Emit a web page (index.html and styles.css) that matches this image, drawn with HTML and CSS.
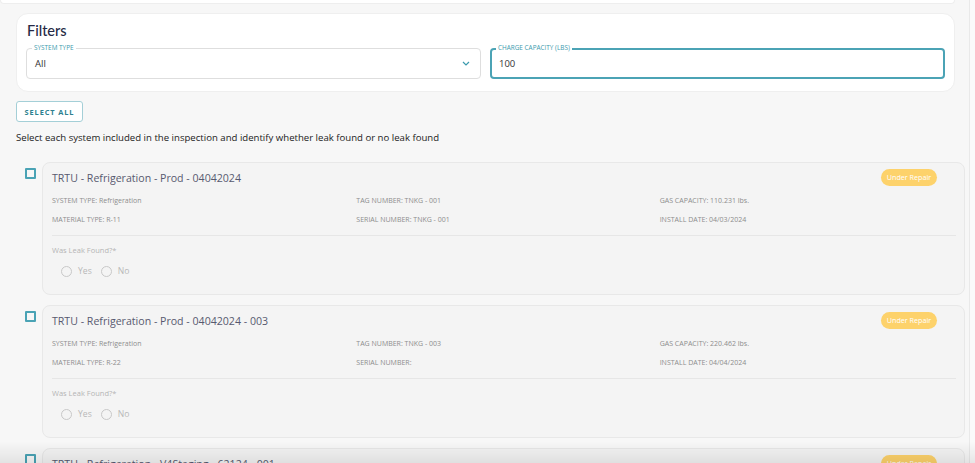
FILE: index.html
```html
<!DOCTYPE html>
<html>
<head>
  <link rel="stylesheet" href="styles.css">
</head>
<body>
  <div class="page">
    <div class="main">
      <div class="top-card"></div>

      <div class="filters">
        <h2 class="filters-title">Filters</h2>
        <div class="filter-row">
          <div class="field">
            <span class="field-label">SYSTEM TYPE</span>
            <span class="field-value">All</span>
            <svg class="chevron" width="8" height="5" viewBox="0 0 8 5"><path d="M1 1l3 3 3-3" fill="none" stroke="#3a9aad" stroke-width="1.2"/></svg>
          </div>
          <div class="field field-active">
            <span class="field-label">CHARGE CAPACITY <span class="label-tail">(LBS)</span></span>
            <span class="field-value">100</span>
          </div>
        </div>
      </div>

      <button class="select-all">SELECT ALL</button>
      <p class="hint">Select each system included in the inspection and identify whether leak found or no leak found</p>

      <div class="system-list">
        <div class="system-row">
          <span class="checkbox"></span>
          <div class="system-card">
            <div class="card-head">
              <h3 class="system-name">TRTU - Refrigeration - Prod - 04042024</h3>
              <span class="status-badge">Under Repair</span>
            </div>
            <div class="info-grid">
              <span>SYSTEM TYPE: Refrigeration</span>
              <span>TAG NUMBER: TNKG - 001</span>
              <span>GAS CAPACITY: 110.231 lbs.</span>
              <span>MATERIAL TYPE: R-11</span>
              <span>SERIAL NUMBER: TNKG - 001</span>
              <span>INSTALL DATE: 04/03/2024</span>
            </div>
            <div class="leak-section">
              <div class="leak-label">Was Leak Found?*</div>
              <div class="radio-row">
                <label class="radio"><span class="radio-dot"></span>Yes</label>
                <label class="radio"><span class="radio-dot"></span>No</label>
              </div>
            </div>
          </div>
        </div>

        <div class="system-row">
          <span class="checkbox"></span>
          <div class="system-card">
            <div class="card-head">
              <h3 class="system-name">TRTU - Refrigeration - Prod - 04042024 - 003</h3>
              <span class="status-badge">Under Repair</span>
            </div>
            <div class="info-grid">
              <span>SYSTEM TYPE: Refrigeration</span>
              <span>TAG NUMBER: TNKG - 003</span>
              <span>GAS CAPACITY: 220.462 lbs.</span>
              <span>MATERIAL TYPE: R-22</span>
              <span>SERIAL NUMBER:</span>
              <span>INSTALL DATE: 04/04/2024</span>
            </div>
            <div class="leak-section">
              <div class="leak-label">Was Leak Found?*</div>
              <div class="radio-row">
                <label class="radio"><span class="radio-dot"></span>Yes</label>
                <label class="radio"><span class="radio-dot"></span>No</label>
              </div>
            </div>
          </div>
        </div>

        <div class="system-row">
          <span class="checkbox"></span>
          <div class="system-card">
            <div class="card-head">
              <h3 class="system-name">TRTU - Refrigeration - V4Staging - 62124 - 001</h3>
              <span class="status-badge">Under Repair</span>
            </div>
          </div>
        </div>
      </div>
    </div>
    <div class="scroll-track"></div>
  </div>
  <div class="bottom-shade"></div>
</body>
</html>
```

FILE: styles.css
```css
body {
  margin: 0;
  height: 463px;
  overflow: hidden;
  background: #f7f7f7;
  font-family: "Open Sans", Arial, sans-serif;
}
.page {
  display: flex;
  height: 100%;
}
.main {
  flex: 1;
  padding: 0 4px 0 16px;
}
.scroll-track {
  width: 5px;
  background: #fafafa;
  border-left: 1px solid #e9e9e9;
}
.top-card {
  height: 3px;
  margin: 0 10px 0 -16px;
  background: #fff;
  border: 1px solid #eeeeee;
  border-top: none;
  border-radius: 0 0 10px 10px;
}
.filters {
  margin: 9px 10px 0 0;
  padding: 8px 9px 12px;
  background: #fff;
  border: 1px solid #efefef;
  border-radius: 12px;
}
.filters-title {
  margin: 0 0 8px 1px;
  font-family: Lato, "Open Sans", sans-serif;
  font-size: 14.5px;
  font-weight: 500;
  color: #262a45;
  line-height: 18px;
}
.filter-row {
  display: flex;
  gap: 9px;
}
.field {
  flex: 1;
  position: relative;
  height: 31px;
  box-sizing: border-box;
  display: flex;
  align-items: center;
  padding: 0 8px;
  border: 1px solid #dedede;
  border-radius: 4px;
}
.field-active {
  border: 2px solid #4ba3b5;
  padding: 0 7px;
}
.field-label {
  position: absolute;
  top: -5px;
  left: 5px;
  padding: 0 2px;
  background: #fff;
  font-size: 6.4px;
  line-height: 8px;
  color: #3a9aad;
}
.field-active .field-label {
  top: -6px;
  left: 4px;
}
.label-tail {
  background: transparent;
}
.field-value {
  flex: 1;
  font-size: 9.5px;
  color: #333;
}
.chevron {
  margin-right: 2px;
}
.select-all {
  display: block;
  margin-top: 9px;
  height: 21px;
  width: 67px;
  padding: 0;
  background: #fff;
  border: 1px solid #a4cfd7;
  border-radius: 3px;
  font-family: "Open Sans", Arial, sans-serif;
  font-size: 7.4px;
  font-weight: 700;
  letter-spacing: 0.9px;
  color: #2d7f8f;
}
.hint {
  margin: 9px 0 0;
  font-size: 9.6px;
  line-height: 13px;
  color: #222;
}
.system-list {
  margin-top: 18px;
  display: flex;
  flex-direction: column;
  gap: 10px;
}
.system-row {
  display: flex;
  align-items: flex-start;
}
.checkbox {
  width: 11px;
  height: 11px;
  box-sizing: border-box;
  margin: 6px 6px 0 9px;
  border: 2px solid #4aa3b5;
  border-radius: 1px;
  flex-shrink: 0;
}
.system-card {
  flex: 1;
  padding: 6px 8px 17px 9px;
  background: #f4f4f4;
  border: 1px solid #e8e8e8;
  border-radius: 8px;
}
.card-head {
  display: flex;
  align-items: center;
  justify-content: space-between;
  height: 17px;
}
.system-name {
  margin: 0;
  font-size: 10.6px;
  font-weight: 400;
  color: #57596f;
}
.status-badge {
  margin-right: 19px;
  width: 56px;
  height: 17px;
  line-height: 17px;
  text-align: center;
  border-radius: 9px;
  background: #fdd26b;
  color: #fff;
  font-size: 7.2px;
}
.info-grid {
  display: grid;
  grid-template-columns: repeat(3, 1fr);
  row-gap: 9px;
  margin-top: 10px;
  padding-bottom: 10px;
  border-bottom: 1px solid #e6e6e6;
  font-size: 7px;
  line-height: 10px;
  color: #8d8d8d;
}
.info-grid span:nth-child(3n+2) {
  padding-left: 3px;
}
.info-grid span:nth-child(3n) {
  padding-left: 5px;
}
.leak-section {
  padding-top: 9px;
}
.leak-label {
  font-size: 7.5px;
  line-height: 10px;
  color: #b4b4b4;
}
.radio-row {
  display: flex;
  gap: 9px;
  margin-top: 10px;
  padding-left: 9px;
  height: 12px;
  align-items: center;
}
.radio {
  display: flex;
  align-items: center;
  gap: 6px;
  font-size: 8.6px;
  color: #b8b8b8;
}
.radio-dot {
  width: 11px;
  height: 11px;
  box-sizing: border-box;
  border: 1px solid #c8c8c8;
  border-radius: 50%;
}
.bottom-shade {
  position: fixed;
  left: 0;
  right: 0;
  bottom: 0;
  height: 22px;
  background: linear-gradient(to bottom, rgba(0, 0, 0, 0), rgba(0, 0, 0, 0.08));
  pointer-events: none;
}
```
